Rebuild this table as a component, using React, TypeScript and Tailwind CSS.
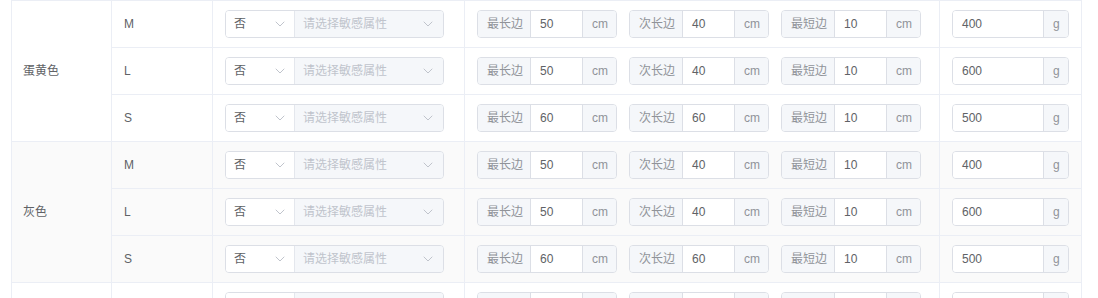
import React from 'react';

type SizeRow = { size: string; longest: number; middle: number; shortest: number; weight: number };
type Group = { color: string; shaded?: boolean; rows: SizeRow[] };

const groups: Group[] = [
  {
    color: '蛋黄色',
    rows: [
      { size: 'M', longest: 50, middle: 40, shortest: 10, weight: 400 },
      { size: 'L', longest: 50, middle: 40, shortest: 10, weight: 600 },
      { size: 'S', longest: 60, middle: 60, shortest: 10, weight: 500 },
    ],
  },
  {
    color: '灰色',
    shaded: true,
    rows: [
      { size: 'M', longest: 50, middle: 40, shortest: 10, weight: 400 },
      { size: 'L', longest: 50, middle: 40, shortest: 10, weight: 600 },
      { size: 'S', longest: 60, middle: 60, shortest: 10, weight: 500 },
    ],
  },
];

function Chevron() {
  return (
    <svg width="10" height="6" viewBox="0 0 10 6" fill="none" className="shrink-0">
      <polyline points="1,1 5,5 9,1" stroke="#c0c4cc" strokeWidth="1" strokeLinecap="round" strokeLinejoin="round" />
    </svg>
  );
}

// 是否敏感 + 敏感属性
function SensitiveSelect() {
  return (
    <div className="flex h-[28px] w-[219px] rounded-[4px] border border-[#dcdfe6] overflow-hidden">
      <div className="flex w-[68px] items-center justify-between bg-white pl-[8px] pr-[9px] text-[#606266]">
        <span>否</span>
        <Chevron />
      </div>
      <div className="flex flex-1 items-center justify-between border-l border-[#e4e7ed] bg-[#f5f7fa] pl-[8px] pr-[10px] text-[#c0c4cc]">
        <span>请选择敏感属性</span>
        <Chevron />
      </div>
    </div>
  );
}

function SideInput({ label, value }: { label: string; value: number }) {
  return (
    <div className="flex h-[28px] w-[140px] rounded-[4px] border border-[#dcdfe6] overflow-hidden">
      <div className="flex w-[53px] items-center bg-[#f5f7fa] pl-[9px] text-[#909399] border-r border-[#dcdfe6]">{label}</div>
      <div className="flex w-[51px] items-center bg-white pl-[9px] text-[#606266]">{value}</div>
      <div className="flex flex-1 items-center bg-[#f5f7fa] pl-[9px] text-[#909399] border-l border-[#dcdfe6]">cm</div>
    </div>
  );
}

function WeightInput({ value }: { value: number }) {
  return (
    <div className="flex h-[28px] w-[117px] rounded-[4px] border border-[#dcdfe6] overflow-hidden">
      <div className="flex w-[90px] items-center bg-white pl-[9px] text-[#606266]">{value}</div>
      <div className="flex flex-1 items-center bg-[#f5f7fa] pl-[9px] text-[#909399] border-l border-[#dcdfe6]">g</div>
    </div>
  );
}

// next colour group, only the top edge of its controls is in view
function PartialRow() {
  const shell = 'h-[28px] rounded-[4px] border border-[#dcdfe6] overflow-hidden flex';
  return (
    <div className="flex h-[16px] overflow-hidden">
      <div className="w-[100px] shrink-0 border-r border-[#ebeef5]" />
      <div className="w-[101px] border-r border-[#ebeef5]" />
      <div className="w-[252px] border-r border-[#ebeef5] pl-[12px] pt-[9px]">
        <div className={`${shell} w-[219px]`}>
          <div className="w-[68px] bg-white" />
          <div className="flex-1 border-l border-[#e4e7ed] bg-[#f5f7fa]" />
        </div>
      </div>
      <div className="flex w-[475px] gap-[12px] border-r border-[#ebeef5] pl-[12px] pt-[9px]">
        {[0, 1, 2].map((i) => (
          <div key={i} className={`${shell} w-[140px]`}>
            <div className="w-[53px] bg-[#f5f7fa] border-r border-[#dcdfe6]" />
            <div className="w-[51px] bg-white" />
            <div className="flex-1 bg-[#f5f7fa] border-l border-[#dcdfe6]" />
          </div>
        ))}
      </div>
      <div className="w-[142px] border-r border-[#ebeef5] pl-[12px] pt-[9px]">
        <div className={`${shell} w-[117px]`}>
          <div className="w-[90px] bg-white" />
          <div className="flex-1 bg-[#f5f7fa] border-l border-[#dcdfe6]" />
        </div>
      </div>
    </div>
  );
}

export default function App() {
  return (
    <div className="h-[298px] w-[1098px] overflow-hidden bg-white font-['Liberation_Sans','Noto_Sans_CJK_SC',sans-serif] text-[12px]">
      <div className="ml-[11px] w-[1071px] border-l border-t border-[#ebeef5]">
        {groups.map((g) => (
          <div key={g.color} className={`flex ${g.shaded ? 'bg-[#fafafa]' : 'bg-white'}`}>
            {/* 颜色 */}
            <div className="flex w-[100px] shrink-0 items-center border-r border-b border-[#ebeef5] pl-[11px] text-[#606266]">
              {g.color}
            </div>
            <div className="flex flex-col">
              {g.rows.map((r) => (
                <div key={r.size} className="flex h-[47px]">
                  <div className="flex w-[101px] items-center border-r border-b border-[#ebeef5] pl-[12px] text-[#606266]">
                    {r.size}
                  </div>
                  <div className="flex w-[252px] items-center border-r border-b border-[#ebeef5] pl-[12px]">
                    <SensitiveSelect />
                  </div>
                  <div className="flex w-[475px] items-center gap-[12px] border-r border-b border-[#ebeef5] pl-[12px]">
                    <SideInput label="最长边" value={r.longest} />
                    <SideInput label="次长边" value={r.middle} />
                    <SideInput label="最短边" value={r.shortest} />
                  </div>
                  <div className="flex w-[142px] items-center border-r border-b border-[#ebeef5] pl-[12px]">
                    <WeightInput value={r.weight} />
                  </div>
                </div>
              ))}
            </div>
          </div>
        ))}
        <PartialRow />
      </div>
    </div>
  );
}
